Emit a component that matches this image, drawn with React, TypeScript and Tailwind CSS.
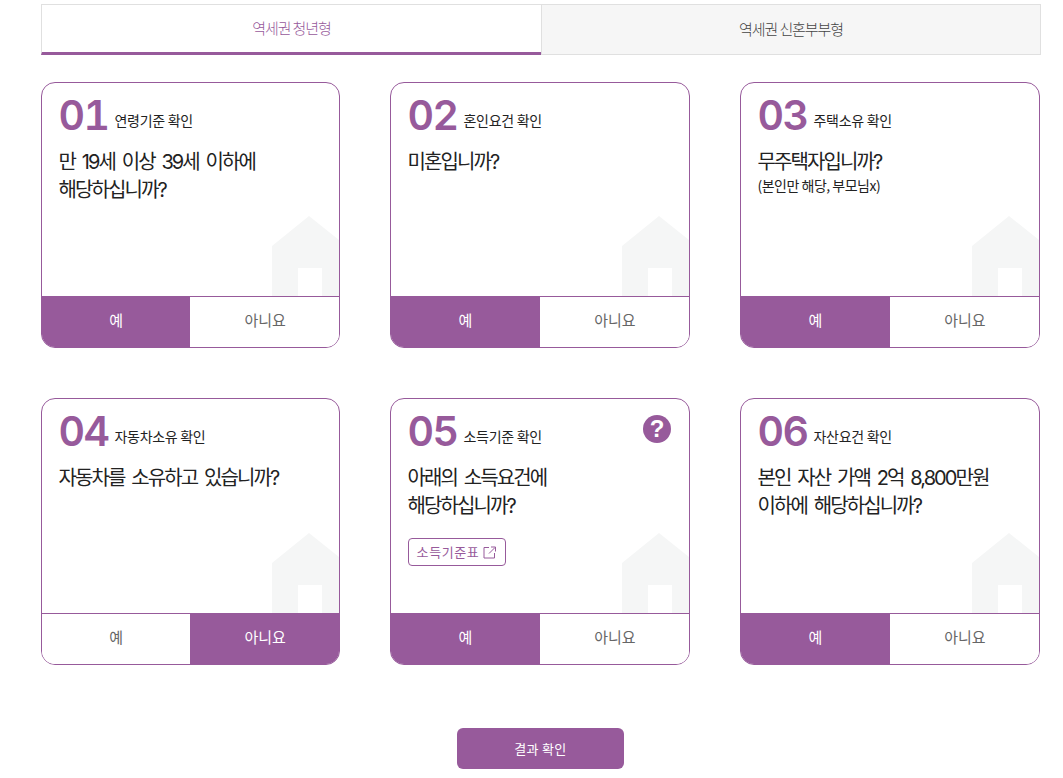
import React from "react";

type CardItem = {
  num: string;
  label: string;
  lines: string[];
  sub?: string;
  answer: "yes" | "no";
  help?: boolean;
  link?: boolean;
};

const cards: CardItem[] = [
  { num: "01", label: "연령기준 확인", lines: ["만 19세 이상 39세 이하에", "해당하십니까?"], answer: "yes" },
  { num: "02", label: "혼인요건 확인", lines: ["미혼입니까?"], answer: "yes" },
  { num: "03", label: "주택소유 확인", lines: ["무주택자입니까?"], sub: "(본인만 해당, 부모님x)", answer: "yes" },
  { num: "04", label: "자동차소유 확인", lines: ["자동차를 소유하고 있습니까?"], answer: "no" },
  { num: "05", label: "소득기준 확인", lines: ["아래의 소득요건에", "해당하십니까?"], answer: "yes", help: true, link: true },
  { num: "06", label: "자산요건 확인", lines: ["본인 자산 가액 2억 8,800만원", "이하에 해당하십니까?"], answer: "yes" },
];

const HouseMark = () => (
  <svg className="absolute right-0 bottom-0" width="67" height="80" viewBox="0 0 67 80" fill="#f5f6f6">
    <path d="M0 30 L37 0 L67 24 L67 80 L50 80 L50 52 L26 52 L26 80 L0 80 Z" />
  </svg>
);

const QuizCard = ({ item }: { item: CardItem }) => {
  const yes = item.answer === "yes";
  return (
    <div className="flex h-full flex-col overflow-hidden rounded-[14px] border border-[#975a9b] bg-white">
      <div className="relative flex-1 px-[16.5px] pt-[7px]">
        <HouseMark />
        <div className="relative flex h-[48px] items-end">
          <span className="-mb-[1px] w-[56px] shrink-0 font-['Inter'] text-[41px] leading-[48px] font-semibold tracking-[-1.5px] text-[#975a9b] tabular-nums">
            {item.num}
          </span>
          <span className="mb-[8px] text-[14px] leading-[20px] tracking-[-0.3px] text-[#222]">{item.label}</span>
          {item.help && (
            <span className="absolute top-[9px] right-[1.5px] flex h-[28px] w-[28px] items-center justify-center rounded-full bg-[#975a9b] font-['Liberation_Sans'] text-[24px] font-bold text-white">
              ?
            </span>
          )}
        </div>
        <div className="relative mt-[10px] font-['Inter','Noto_Sans_CJK_KR',sans-serif] text-[20px] leading-[28px] tracking-[-1.9px] [word-spacing:3px] text-[#222]">
          {item.lines.map((line) => (
            <p key={line}>{line}</p>
          ))}
        </div>
        {item.sub && <p className="relative -mt-[1px] text-[14px] leading-[20px] tracking-[-0.5px] text-[#222]">{item.sub}</p>}
        {item.link && (
          <a className="relative mt-[18px] flex h-[28px] w-[98px] items-center justify-center gap-[4px] rounded-[4px] border border-[#975a9b] text-[13px] tracking-[0.6px] text-[#975a9b]">
            소득기준표
            <svg width="13" height="13" viewBox="0 0 13 13" fill="none" stroke="#975a9b" strokeWidth="1">
              <path d="M6 1.5H1V12H11.5V7" />
              <path d="M6 7.5L12 1.5M8 1H12.5V5.5" />
            </svg>
          </a>
        )}
      </div>
      <div className="flex h-[51px] border-t border-[#975a9b] text-[15px]">
        <button className={`w-[49.9%] pb-[3px] ${yes ? "bg-[#975a9b] text-white" : "bg-white text-[#666]"}`}>예</button>
        <button className={`flex-1 pb-[3px] pl-[1px] ${yes ? "bg-white text-[#666]" : "bg-[#975a9b] text-white"}`}>아니요</button>
      </div>
    </div>
  );
};

export default function App() {
  return (
    <div className="h-[778px] overflow-hidden bg-white pt-[4px] pl-[41px] font-['Noto_Sans_CJK_KR',sans-serif]">
      <div className="w-[1000px]">
        <div className="flex h-[51px] text-[15px] font-light tracking-[-1.1px]">
          <div className="flex w-[500px] items-center justify-center border-t border-l border-[#e0e0e0] border-b-[3px] border-b-[#975a9b] text-[#975a9b]">
            역세권 청년형
          </div>
          <div className="flex flex-1 items-center justify-center border border-[#e0e0e0] bg-[#f6f6f6] text-[#444]">
            역세권 신혼부부형
          </div>
        </div>
        <div className="mt-[27px] grid grid-cols-[299px_300px_300px] grid-rows-[266px_267px] gap-x-[50px] gap-y-[50px]">
          {cards.map((item) => (
            <QuizCard key={item.num} item={item} />
          ))}
        </div>
        <div className="mt-[63px] flex w-[999px] justify-center">
          <button className="h-[41px] w-[167px] rounded-[6px] bg-[#975a9b] text-[13px] tracking-[0.3px] text-white">결과 확인</button>
        </div>
      </div>
    </div>
  );
}
